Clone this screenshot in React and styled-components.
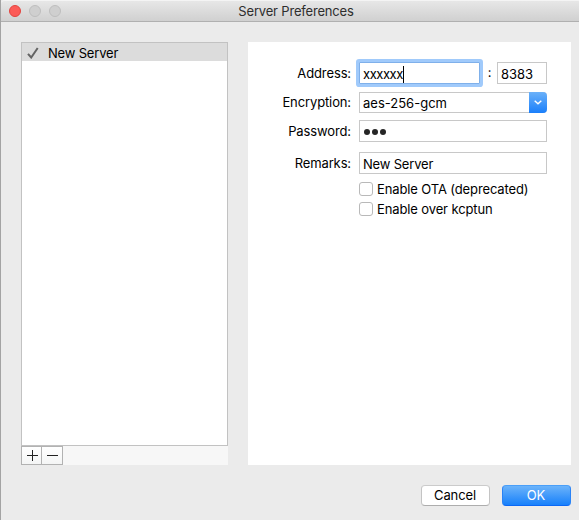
import React from "react";
import styled, { createGlobalStyle } from "styled-components";

const GlobalStyle = createGlobalStyle`
  * { box-sizing: border-box; }
  body { margin: 0; background: #ebebeb; overflow: hidden; }
`;

const Window = styled.main`
  width: 579px;
  height: 520px;
  display: flex;
  flex-direction: column;
  background: #ebebeb;
  border-left: 1px solid #a3a3a3;
  color: #000;
  font: 13px/16px Inter, "Liberation Sans", sans-serif;
  letter-spacing: -0.12px;
  white-space: nowrap;
`;

const TitleBar = styled.header`
  height: 22px;
  flex: none;
  display: grid;
  grid-template-columns: 60px 1fr 56px;
  align-items: center;
  padding: 0 0 0 8px;
  border-top: 1px solid #f4f4f4;
  border-bottom: 1px solid #b0b0b0;
  border-top-left-radius: 4px;
  background: linear-gradient(#e7e7e7, #d0d0d0);
`;

const Lights = styled.div`
  display: flex;
  gap: 8px;
`;

const Light = styled.span`
  width: 12px;
  height: 12px;
  border-radius: 50%;
  border: 1px solid ${(p) => (p.$close ? "#e2443f" : "#bebebe")};
  background: ${(p) => (p.$close ? "#fc5b57" : "#cfcfcf")};
`;

const Title = styled.h1`
  margin: 0;
  font-size: 13px;
  font-weight: 400;
  letter-spacing: -0.18px;
  text-align: center;
  color: #2e2e2e;
`;

const Content = styled.div`
  display: flex;
  gap: 20px;
  padding: 20px 8px 0 20px;
`;

const Sidebar = styled.aside`
  width: 207px;
  height: 423px;
  display: flex;
  flex-direction: column;
  background: #f7f7f7;
`;

const ServerList = styled.div`
  height: 404px;
  border: 1px solid #c2c2c2;
  background: #fff;
`;

const ServerRow = styled.div`
  height: 18px;
  display: flex;
  align-items: center;
  gap: 9px;
  padding: 2px 0 0 5px;
  background: #dcdcdc;
  letter-spacing: -0.18px;
`;

const ListActions = styled.div`
  display: flex;
  height: 19px;
`;

const ListButton = styled.button`
  width: 21px;
  height: 19px;
  padding: 0 0 0 ${(p) => p.$inset ?? 0}px;
  display: flex;
  align-items: center;
  justify-content: center;
  border: 1px solid #b2b2b2;
  background: linear-gradient(#fff, #f4f5f5);
  & + & { border-left: 0; }
`;

const Panel = styled.section`
  width: 323px;
  height: 423px;
  padding-top: 20px;
  background: #fff;
`;

const FormRow = styled.div`
  display: flex;
  height: 22px;
  margin-bottom: ${(p) => p.$after}px;
`;

const Label = styled.label`
  width: 103px;
  margin-right: 8px;
  padding-top: ${(p) => p.$top ?? 3}px;
  text-align: right;
`;

const Field = styled.div`
  width: ${(p) => p.$width}px;
  height: 22px;
  display: flex;
  align-items: center;
  padding: 2px 0 0 3px;
  border: 1px solid ${(p) => (p.$focused ? "#7fb0ea" : "#c8c8c8")};
  box-shadow: ${(p) => (p.$focused ? "0 0 0 3px #a0cafb" : "none")};
  border-radius: ${(p) => (p.$focused ? 1 : 0)}px;
  background: #fff;
  letter-spacing: ${(p) => p.$tracking ?? 0}px;
`;

const Caret = styled.span`
  width: 1px;
  height: 17px;
  background: #000;
`;

const Colon = styled.span`
  width: 17px;
  padding: 2px 0 0 2px;
  text-align: center;
`;

const ComboBox = styled.div`
  width: 188px;
  height: 21px;
  display: flex;
  align-items: center;
  justify-content: space-between;
  padding: 1px 0 0 3px;
  border: 1px solid #c8c8c8;
  border-right: 0;
  border-radius: 0 4px 4px 0;
  letter-spacing: 0;
`;

const ComboArrow = styled.span`
  width: 18px;
  height: 21px;
  margin-top: -1px;
  display: flex;
  align-items: center;
  justify-content: center;
  border-radius: 0 4px 4px 0;
  background: linear-gradient(#6bb1f9, #1a7ffb);
`;

const Dots = styled.span`
  display: flex;
  gap: 2px;
  padding: 0 0 1px 1px;
`;

const Dot = styled.i`
  width: 6px;
  height: 6px;
  border-radius: 50%;
  background: #262626;
`;

const Checks = styled.div`
  display: flex;
  flex-direction: column;
  gap: 6px;
  margin-left: 111px;
`;

const Check = styled.label`
  height: 14px;
  display: flex;
  align-items: center;
  gap: 4px;
`;

const Box = styled.span`
  width: 14px;
  height: 14px;
  border: 1px solid #b9b9b9;
  border-radius: 3px;
  background: #fff;
`;

const Footer = styled.footer`
  display: flex;
  justify-content: flex-end;
  gap: 12px;
  padding: 20px 8px 0 0;
`;

const PushButton = styled.button`
  width: 69px;
  height: 21px;
  padding: 0 1px 0 0;
  border: 1px solid;
  border-color: ${(p) => (p.$primary ? "#4a9ff8 #2a83f6 #0a67f5" : "#cbcbcb #c4c4c4 #adadad")};
  border-radius: 4px;
  background: ${(p) => (p.$primary ? "linear-gradient(#6bb3fa, #1780fb)" : "#fff")};
  color: ${(p) => (p.$primary ? "#fff" : "#000")};
  font: inherit;
  letter-spacing: -0.12px;
  line-height: 19px;
`;

export default function App() {
  return (
    <>
      <GlobalStyle />
      <Window>
        <TitleBar>
          <Lights>
            <Light $close />
            <Light />
            <Light />
          </Lights>
          <Title>Server Preferences</Title>
        </TitleBar>
        <Content>
          <Sidebar>
            <ServerList>
              <ServerRow>
                <svg width="12" height="12" viewBox="0 0 12 12" fill="none" stroke="#646464" strokeWidth="2">
                  <path d="M1 6.8 4.2 10.5 10.7 1" />
                </svg>
                <span>New Server</span>
              </ServerRow>
            </ServerList>
            <ListActions>
              <ListButton $inset={1} aria-label="Add">
                <svg width="11" height="11" viewBox="0 0 11 11" stroke="#222">
                  <path d="M0 5.5H11M5.5 0V11" />
                </svg>
              </ListButton>
              <ListButton aria-label="Remove">
                <svg width="11" height="11" viewBox="0 0 11 11" stroke="#222">
                  <path d="M0 5.5H11" />
                </svg>
              </ListButton>
            </ListActions>
          </Sidebar>
          <Panel>
            <FormRow $after={8}>
              <Label>Address:</Label>
              <Field $width={121} $focused $tracking={-0.45}>
                xxxxxx
                <Caret />
              </Field>
              <Colon>:</Colon>
              <Field $width={50}>8383</Field>
            </FormRow>
            <FormRow $after={6}>
              <Label $top={2}>Encryption:</Label>
              <ComboBox>
                aes-256-gcm
                <ComboArrow>
                  <svg width="8" height="5" viewBox="0 0 8 5" fill="none" stroke="#fff" strokeWidth="1.4">
                    <path d="M0.7 0.7 4 3.8 7.3 0.7" />
                  </svg>
                </ComboArrow>
              </ComboBox>
            </FormRow>
            <FormRow $after={10}>
              <Label>Password:</Label>
              <Field $width={188}>
                <Dots>
                  <Dot />
                  <Dot />
                  <Dot />
                </Dots>
              </Field>
            </FormRow>
            <FormRow $after={8}>
              <Label>Remarks:</Label>
              <Field $width={188} $tracking={-0.18}>
                New Server
              </Field>
            </FormRow>
            <Checks>
              <Check>
                <Box />
                Enable OTA (deprecated)
              </Check>
              <Check>
                <Box />
                Enable over kcptun
              </Check>
            </Checks>
          </Panel>
        </Content>
        <Footer>
          <PushButton>Cancel</PushButton>
          <PushButton $primary>OK</PushButton>
        </Footer>
      </Window>
    </>
  );
}
